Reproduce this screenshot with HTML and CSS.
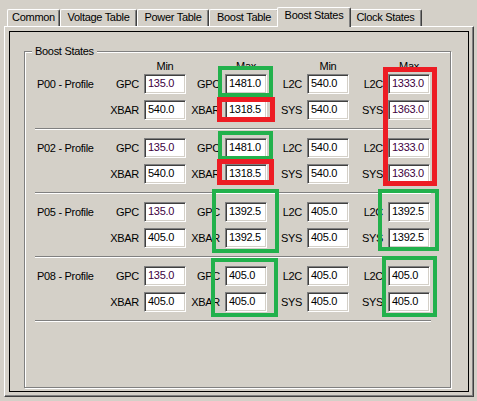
FILE: index.html
```html
<!DOCTYPE html>
<html>
<head>
<meta charset="utf-8">
<link rel="stylesheet" href="styles.css">
</head>
<body>
<div class="tabs">
  <div class="tab t1">Common</div>
  <div class="tab t2">Voltage Table</div>
  <div class="tab t3">Power Table</div>
  <div class="tab t4">Boost Table</div>
  <div class="tab t5 sel">Boost States</div>
  <div class="tab t6">Clock States</div>
</div>
<div class="panel">
  <div class="frame">
    <div class="group">
      <div class="legend">Boost States</div>
      <div class="grid heads">
        <span></span><span></span><span class="head">Min</span><span></span><span class="head">Max</span><span></span><span class="head">Min</span><span></span><span class="head">Max</span>
      </div>

      <div class="grid block first">
        <span class="name">P00 - Profile</span>
        <span class="lab">GPC</span><span class="edit p">135.0</span>
        <span class="lab">GPC</span><span class="edit">1481.0</span>
        <span class="lab">L2C</span><span class="edit">540.0</span>
        <span class="lab">L2C</span><span class="edit p">1333.0</span>
        <span></span>
        <span class="lab">XBAR</span><span class="edit">540.0</span>
        <span class="lab">XBAR</span><span class="edit">1318.5</span>
        <span class="lab">SYS</span><span class="edit">540.0</span>
        <span class="lab">SYS</span><span class="edit p">1363.0</span>
      </div>
      <div class="sep"></div>

      <div class="grid block">
        <span class="name">P02 - Profile</span>
        <span class="lab">GPC</span><span class="edit p">135.0</span>
        <span class="lab">GPC</span><span class="edit">1481.0</span>
        <span class="lab">L2C</span><span class="edit">540.0</span>
        <span class="lab">L2C</span><span class="edit p">1333.0</span>
        <span></span>
        <span class="lab">XBAR</span><span class="edit">540.0</span>
        <span class="lab">XBAR</span><span class="edit">1318.5</span>
        <span class="lab">SYS</span><span class="edit">540.0</span>
        <span class="lab">SYS</span><span class="edit p">1363.0</span>
      </div>
      <div class="sep"></div>

      <div class="grid block">
        <span class="name">P05 - Profile</span>
        <span class="lab">GPC</span><span class="edit p">135.0</span>
        <span class="lab">GPC</span><span class="edit">1392.5</span>
        <span class="lab">L2C</span><span class="edit">405.0</span>
        <span class="lab">L2C</span><span class="edit">1392.5</span>
        <span></span>
        <span class="lab">XBAR</span><span class="edit">405.0</span>
        <span class="lab">XBAR</span><span class="edit">1392.5</span>
        <span class="lab">SYS</span><span class="edit">405.0</span>
        <span class="lab">SYS</span><span class="edit">1392.5</span>
      </div>
      <div class="sep"></div>

      <div class="grid block">
        <span class="name">P08 - Profile</span>
        <span class="lab">GPC</span><span class="edit p">135.0</span>
        <span class="lab">GPC</span><span class="edit">405.0</span>
        <span class="lab">L2C</span><span class="edit">405.0</span>
        <span class="lab">L2C</span><span class="edit">405.0</span>
        <span></span>
        <span class="lab">XBAR</span><span class="edit">405.0</span>
        <span class="lab">XBAR</span><span class="edit">405.0</span>
        <span class="lab">SYS</span><span class="edit">405.0</span>
        <span class="lab">SYS</span><span class="edit">405.0</span>
      </div>
      <div class="sep"></div>
    </div>
  </div>
</div>

<div class="mark green m1"></div>
<div class="mark red m2"></div>
<div class="mark red m3"></div>
<div class="mark green m4"></div>
<div class="mark red m5"></div>
<div class="mark green m6"></div>
<div class="mark green m7"></div>
<div class="mark green m8"></div>
<div class="mark green m9"></div>
</body>
</html>
```
FILE: styles.css
```css
* { box-sizing: border-box; }
html, body { margin: 0; }
body {
  position: relative;
  width: 477px;
  height: 401px;
  overflow: hidden;
  background: #d4d0c8;
  color: #000;
  font-family: "Liberation Sans", Arial, sans-serif;
  font-size: 11px;
  line-height: 13px;
  letter-spacing: -0.3px;
  padding: 7px 3px 0 4px;
}

/* tab strip */
.tabs {
  display: flex;
  align-items: flex-end;
  height: 19px;
  padding-left: 3px;
}
.tab {
  height: 17px;
  border: 1px solid #fff;
  border-bottom: 0;
  border-right-color: #404040;
  box-shadow: inset -1px 0 #808080;
  border-radius: 2px 2px 0 0;
  background: #d4d0c8;
  text-align: center;
  padding-top: 1px;
  white-space: nowrap;
}
.t1 { width: 53px; }
.t2 { width: 77px; }
.t3 { width: 72px; }
.t4 { width: 70px; }
.t5 { width: 74px; }
.t6 { width: 73px; }
.tab.sel {
  height: 20px;
  margin: 0 -2px -1px;
  position: relative;
  z-index: 1;
}

/* page */
.panel {
  width: 470px;
  height: 371px;
  border: 1px solid;
  border-color: #fff #404040 #404040 #fff;
  box-shadow: inset -1px -1px #808080;
  padding: 4px;
}
.frame {
  height: 100%;
  border: 1px solid #000;
  padding: 19px 0 0 14px;
}

/* group box */
.group {
  position: relative;
  width: 427px;
  height: 337px;
  border: 1px solid #808080;
  box-shadow: inset 1px 1px #fff, 1px 1px #fff;
  padding: 8px 0 0 10px;
}
.legend {
  position: absolute;
  top: -7px;
  left: 7px;
  padding: 0 3px;
  background: #d4d0c8;
}

.grid {
  display: grid;
  grid-template-columns: 64px 45px 42px 39px 42px 40px 42px 39px 42px;
}
.heads { height: 14px; }
.head { text-align: center; }

.block {
  width: 396px;
  grid-template-rows: 20px 20px;
  row-gap: 6px;
  padding: 8px 0;
}
.block.first { padding-top: 0; }
.sep {
  width: 396px;
  border-top: 1px solid #808080;
  border-bottom: 1px solid #fff;
}
.name {
  padding-left: 2px;
  line-height: 20px;
  white-space: nowrap;
}
.lab {
  text-align: right;
  padding-right: 5px;
  line-height: 20px;
}
.edit {
  height: 20px;
  background: #fff;
  border: 1px solid;
  border-color: #808080 #fff #fff #808080;
  box-shadow: inset 1px 1px #404040, inset -1px -1px #d4d0c8;
  padding-left: 3px;
  line-height: 17px;
}
.edit.p { color: #400040; }

/* annotation rectangles */
.mark { position: absolute; }
.green { border: 4px solid #22b14c; }
.red { border: 5px solid #ed1c24; }
.m1 { left: 218px; top: 66px; width: 55px; height: 31px; }
.m2 { left: 217px; top: 97px; width: 58px; height: 25px; }
.m3 { left: 383px; top: 67px; width: 54px; height: 119px; }
.m4 { left: 218px; top: 131px; width: 55px; height: 29px; }
.m5 { left: 217px; top: 159px; width: 57px; height: 26px; }
.m6 { left: 212px; top: 189px; width: 67px; height: 64px; }
.m7 { left: 378px; top: 189px; width: 61px; height: 62px; }
.m8 { left: 211px; top: 258px; width: 67px; height: 59px; }
.m9 { left: 382px; top: 256px; width: 55px; height: 61px; }
```
